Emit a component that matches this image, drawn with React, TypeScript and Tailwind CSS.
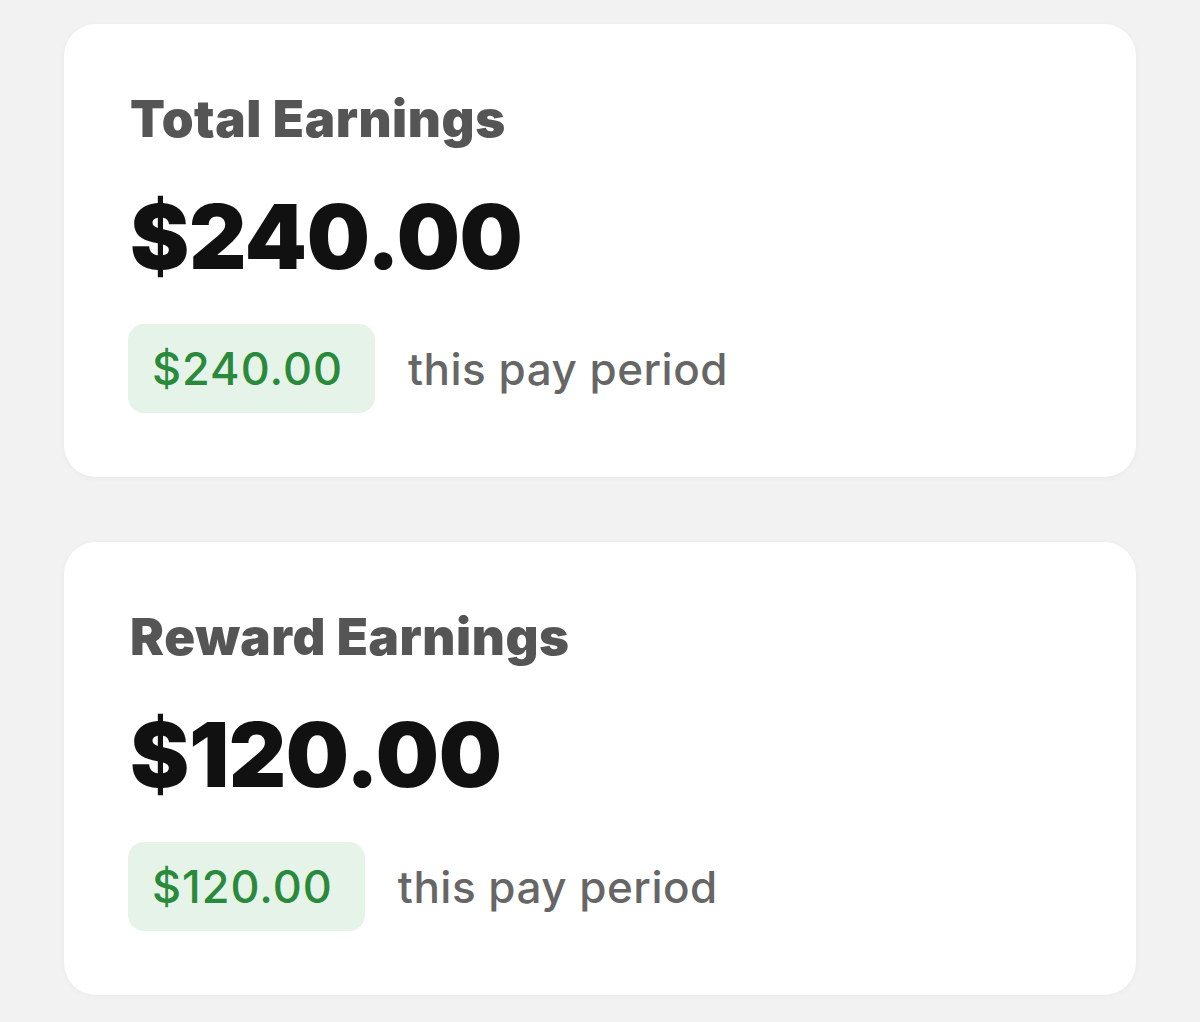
import React from "react";

function Card({ title, amount }: { title: string; amount: string }) {
  return (
    <div className="bg-white rounded-[32px] shadow-[0_1px_6px_rgba(0,0,0,0.04)] pl-[64px] pr-10 pt-[65px] pb-[64px]">
      <div className="pl-[2px] text-[51px] leading-[60px] font-black text-[#555555] tracking-[0.6px]">{title}</div>
      <div className="pl-[2px] mt-[38px] text-[89px] leading-[100px] font-black text-[#111111] tracking-[-0.4px]">{amount}</div>
      <div className="mt-[37px] flex items-center gap-[33px]">
        <div className="h-[89px] pl-[24px] pr-[32px] rounded-[16px] bg-[#e5f3e8] flex items-center text-[45px] font-medium text-[#2a8a3c] tracking-[1px]">{amount}</div>
        <div className="text-[44px] font-medium text-[#666666] tracking-[0.5px]">this pay period</div>
      </div>
    </div>
  );
}

export default function App() {
  return (
    <div className="w-[1200px] h-[1022px] bg-[#f2f2f2] px-[64px] pt-[24px] flex flex-col gap-[65px]" style={{ fontFamily: "Inter, 'Noto Sans', sans-serif" }}>
      <Card title="Total Earnings" amount="$240.00" />
      <Card title="Reward Earnings" amount="$120.00" />
    </div>
  );
}
